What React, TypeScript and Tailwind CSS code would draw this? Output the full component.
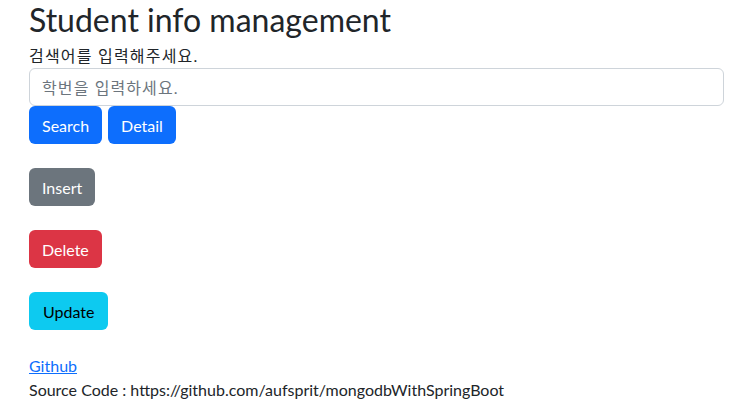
import React from 'react';

const font = { fontFamily: 'Lato, "Noto Sans CJK KR", sans-serif' };

const btn = 'inline-block h-[38px] px-3 rounded-md text-[16px] leading-[38px] border border-transparent';

export default function App() {
  return (
    <div className="min-h-screen bg-white text-[#212529] text-[16px] leading-6 pl-[29px] pr-[7px]" style={font}>
      <h1 className="text-[32px] leading-[40px] font-normal mb-1">Student info management</h1>
      <div className="h-6 tracking-[1.2px]">검색어를 입력해주세요.</div>
      <input
        type="text"
        placeholder="학번을 입력하세요."
        className="block w-full h-[38px] px-3 border border-[#ced4da] rounded-md tracking-[1.1px] placeholder:text-[#6c757d] outline-none"
      />
      <div className="flex gap-[6px]">
        <button className={`${btn} bg-[#0d6efd] text-white`}>Search</button>
        <button className={`${btn} bg-[#0d6efd] text-white`}>Detail</button>
      </div>
      <div className="h-6" />
      <button className={`${btn} bg-[#6c757d] text-white`}>Insert</button>
      <div className="h-6" />
      <button className={`${btn} bg-[#dc3545] text-white`}>Delete</button>
      <div className="h-6" />
      <button className={`${btn} bg-[#0dcaf0] text-black px-[13px]`}>Update</button>
      <div className="h-6" />
      <a href="#" className="block w-fit text-[#0d6efd] underline">Github</a>
      <p>Source Code : https://github.com/aufsprit/mongodbWithSpringBoot</p>
    </div>
  );
}
